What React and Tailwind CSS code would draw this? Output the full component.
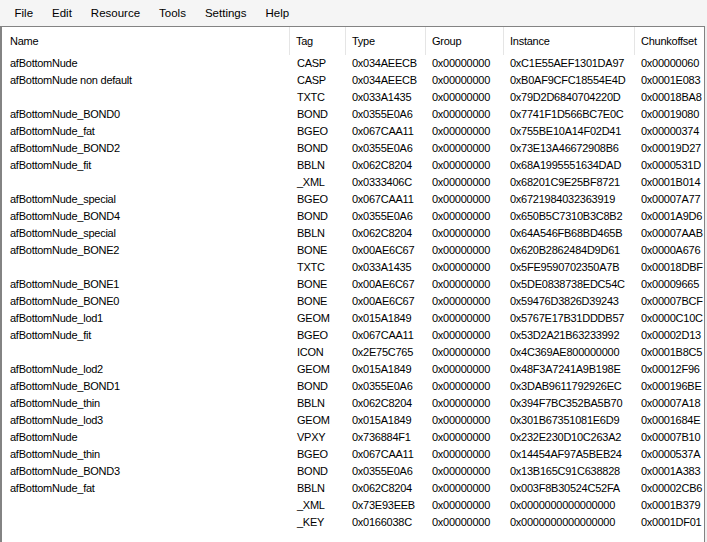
import React from 'react';

const menus = ['File', 'Edit', 'Resource', 'Tools', 'Settings', 'Help'];

const columns = [
  { key: 'name', label: 'Name', width: 'w-[288px]', pad: 'pl-[8px]' },
  { key: 'tag', label: 'Tag', width: 'w-[56px]', pad: 'pl-[6px]' },
  { key: 'type', label: 'Type', width: 'w-[80px]', pad: 'pl-[6px]' },
  { key: 'group', label: 'Group', width: 'w-[78px]', pad: 'pl-[6px]' },
  { key: 'instance', label: 'Instance', width: 'w-[131px]', pad: 'pl-[6px]' },
  { key: 'chunk', label: 'Chunkoffset', width: 'w-[80px]', pad: 'pl-[6px]' },
];

// name, tag, type, instance, chunkoffset (group is always zero)
const rows = [
  ['afBottomNude', 'CASP', '0x034AEECB', '0xC1E55AEF1301DA97', '0x00000060'],
  ['afBottomNude non default', 'CASP', '0x034AEECB', '0xB0AF9CFC18554E4D', '0x0001E083'],
  ['', 'TXTC', '0x033A1435', '0x79D2D6840704220D', '0x00018BA8'],
  ['afBottomNude_BOND0', 'BOND', '0x0355E0A6', '0x7741F1D566BC7E0C', '0x00019080'],
  ['afBottomNude_fat', 'BGEO', '0x067CAA11', '0x755BE10A14F02D41', '0x00000374'],
  ['afBottomNude_BOND2', 'BOND', '0x0355E0A6', '0x73E13A46672908B6', '0x00019D27'],
  ['afBottomNude_fit', 'BBLN', '0x062C8204', '0x68A1995551634DAD', '0x0000531D'],
  ['', '_XML', '0x0333406C', '0x68201C9E25BF8721', '0x0001B014'],
  ['afBottomNude_special', 'BGEO', '0x067CAA11', '0x6721984032363919', '0x00007A77'],
  ['afBottomNude_BOND4', 'BOND', '0x0355E0A6', '0x650B5C7310B3C8B2', '0x0001A9D6'],
  ['afBottomNude_special', 'BBLN', '0x062C8204', '0x64A546FB68BD465B', '0x00007AAB'],
  ['afBottomNude_BONE2', 'BONE', '0x00AE6C67', '0x620B2862484D9D61', '0x0000A676'],
  ['', 'TXTC', '0x033A1435', '0x5FE9590702350A7B', '0x00018DBF'],
  ['afBottomNude_BONE1', 'BONE', '0x00AE6C67', '0x5DE0838738EDC54C', '0x00009665'],
  ['afBottomNude_BONE0', 'BONE', '0x00AE6C67', '0x59476D3826D39243', '0x00007BCF'],
  ['afBottomNude_lod1', 'GEOM', '0x015A1849', '0x5767E17B31DDDB57', '0x0000C10C'],
  ['afBottomNude_fit', 'BGEO', '0x067CAA11', '0x53D2A21B63233992', '0x00002D13'],
  ['', 'ICON', '0x2E75C765', '0x4C369AE800000000', '0x0001B8C5'],
  ['afBottomNude_lod2', 'GEOM', '0x015A1849', '0x48F3A7241A9B198E', '0x00012F96'],
  ['afBottomNude_BOND1', 'BOND', '0x0355E0A6', '0x3DAB9611792926EC', '0x000196BE'],
  ['afBottomNude_thin', 'BBLN', '0x062C8204', '0x394F7BC352BA5B70', '0x00007A18'],
  ['afBottomNude_lod3', 'GEOM', '0x015A1849', '0x301B67351081E6D9', '0x0001684E'],
  ['afBottomNude', 'VPXY', '0x736884F1', '0x232E230D10C263A2', '0x00007B10'],
  ['afBottomNude_thin', 'BGEO', '0x067CAA11', '0x14454AF97A5BEB24', '0x0000537A'],
  ['afBottomNude_BOND3', 'BOND', '0x0355E0A6', '0x13B165C91C638828', '0x0001A383'],
  ['afBottomNude_fat', 'BBLN', '0x062C8204', '0x003F8B30524C52FA', '0x00002CB6'],
  ['', '_XML', '0x73E93EEB', '0x0000000000000000', '0x0001B379'],
  ['', '_KEY', '0x0166038C', '0x0000000000000000', '0x0001DF01'],
];

const App = () => {
  return (
    <div className="w-[707px] h-[542px] overflow-hidden flex flex-col bg-[#f0f0f0] text-black font-['Liberation_Sans',Arial,sans-serif]">

      {/* Menu bar */}
      <div className="h-[26px] flex items-center pl-[5px] text-[11.5px] bg-[#f5f5f5]">
        {menus.map(m => (
          <div key={m} className="px-[9.5px] leading-[26px]">{m}</div>
        ))}
      </div>

      {/* List view */}
      <div className="flex-1 mr-[2px] bg-white border-l-2 border-t border-r border-[#838383] overflow-hidden text-[11px] tracking-[-0.25px]">

        <div className="flex h-[28px] items-center">
          {columns.map(col => (
            <div
              key={col.key}
              className={`${col.width} ${col.pad} h-full flex items-center shrink-0 ${col.key !== 'chunk' ? 'border-r border-[#e5e5e5]' : ''}`}
            >
              {col.label}
            </div>
          ))}
        </div>

        {rows.map((r, idx) => (
          <div key={idx} className="flex h-[17px] items-center whitespace-nowrap">
            <div className="w-[288px] pl-[8px] shrink-0">{r[0]}</div>
            <div className="w-[56px] pl-[7px] shrink-0">{r[1]}</div>
            <div className="w-[80px] pl-[6px] shrink-0">{r[2]}</div>
            <div className="w-[78px] pl-[6px] shrink-0">0x00000000</div>
            <div className="w-[131px] pl-[6px] shrink-0">{r[3]}</div>
            <div className="w-[80px] pl-[6px] shrink-0">{r[4]}</div>
          </div>
        ))}

      </div>
    </div>
  );
};

export default App;
